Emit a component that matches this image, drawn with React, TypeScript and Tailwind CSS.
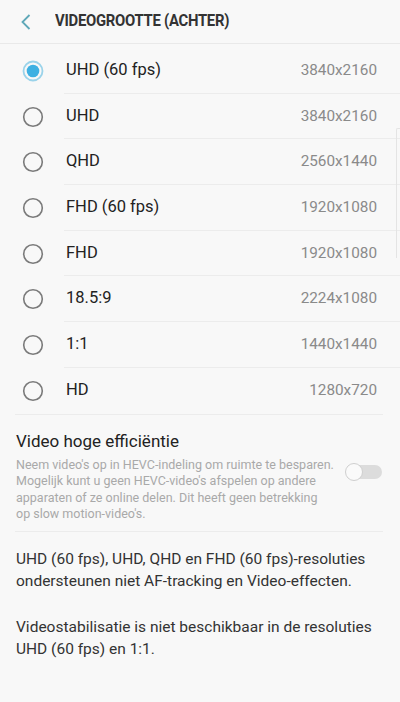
import React from "react";

const rows = [
  ["UHD (60 fps)", "3840x2160"],
  ["UHD", "3840x2160"],
  ["QHD", "2560x1440"],
  ["FHD (60 fps)", "1920x1080"],
  ["FHD", "1920x1080"],
  ["18.5:9", "2224x1080"],
  ["1:1", "1440x1440"],
  ["HD", "1280x720"],
];

function Radio({ on }: { on: boolean }) {
  return (
    <svg width="22" height="22" viewBox="0 0 22 22">
      {on ? (
        <>
          <circle cx="11" cy="11" r="9.5" fill="none" stroke="#9ad3ea" strokeWidth="1.8" />
          <circle cx="11" cy="11" r="6.3" fill="#3db0e2" />
        </>
      ) : (
        <circle cx="11" cy="11" r="9.3" fill="none" stroke="#7a7a7a" strokeWidth="1.6" />
      )}
    </svg>
  );
}

export default function App() {
  return (
    <div
      className="w-[400px] h-[702px] bg-[#f8f8f8] overflow-hidden relative"
      style={{ fontFamily: "Roboto, 'Noto Sans', sans-serif" }}
    >
      <div className="h-[44px] flex items-center border-b border-[#e9e9e9] bg-[#f8f8f8]">
        <svg width="14" height="20" viewBox="0 0 14 20" className="ml-[19px]">
          <path d="M10.5 3 L3.5 10 L10.5 17" fill="none" stroke="#5fa8b8" strokeWidth="1.8" />
        </svg>
        <div
          className="ml-[22px] text-[16.5px] font-bold text-[#333] tracking-[-0.3px] origin-left scale-x-[0.9]"
        >
          VIDEOGROOTTE (ACHTER)
        </div>
      </div>
      <div className="pt-[4px]">
        {rows.map(([l, v], i) => (
          <div key={l} className="h-[45.7px] flex items-center">
            <div className="w-[64px] flex justify-center pl-[2px]">
              <Radio on={i === 0} />
            </div>
            <div
              className={`flex-1 h-full flex items-center justify-between pr-[23px] ${i < rows.length - 1 ? "border-b border-[#ececec]" : ""}`}
            >
              <span className="text-[16.5px] text-[#222] ml-[2px]">{l}</span>
              <span className="text-[15.3px] text-[#8a8a8a]">{v}</span>
            </div>
          </div>
        ))}
      </div>
      <div className="mx-[15px] border-t border-[#ececec] mr-[17px] pt-[14px] pb-[10px] flex items-center">
        <div className="flex-1 min-w-0 whitespace-nowrap">
          <div className="text-[17px] text-[#222] leading-[24px] ml-[1px]">Video hoge efficiëntie</div>
          <div className="text-[12.5px] text-[#a9a9a9] leading-[16.5px] ml-[1px] mt-[4px] mb-[-2px]">
            Neem video's op in HEVC-indeling om ruimte te besparen.
            <br />
            Mogelijk kunt u geen HEVC-video's afspelen op andere
            <br />
            apparaten of ze online delen. Dit heeft geen betrekking
            <br />
            op slow motion-video's.
          </div>
        </div>
        <div className="relative w-[37px] h-[18px] -mt-[6px] mr-[1px] shrink-0">
          <div className="absolute left-[4px] right-0 top-[2px] h-[14px] rounded-full bg-[#dcdcdc]" />
          <div className="absolute left-0 top-0 w-[18px] h-[18px] rounded-full bg-[#fafafa] border border-[#cfcfcf]" />
        </div>
      </div>
      <div className="mx-[15px] mr-[17px] border-t border-[#ececec] pt-[16px] text-[15.5px] text-[#333] leading-[22.5px] pl-[1px]">
        <p>
          UHD (60 fps), UHD, QHD en FHD (60 fps)-resoluties
          <br />
          ondersteunen niet AF-tracking en Video-effecten.
        </p>
        <p className="mt-[23px]">
          Videostabilisatie is niet beschikbaar in de resoluties
          <br />
          UHD (60 fps) en 1:1.
        </p>
      </div>
      <div className="absolute right-0 top-[128px] w-[4px] h-[130px] border-l border-t border-[#e4e4e4] rounded-tl-[2px]" />
    </div>
  );
}
